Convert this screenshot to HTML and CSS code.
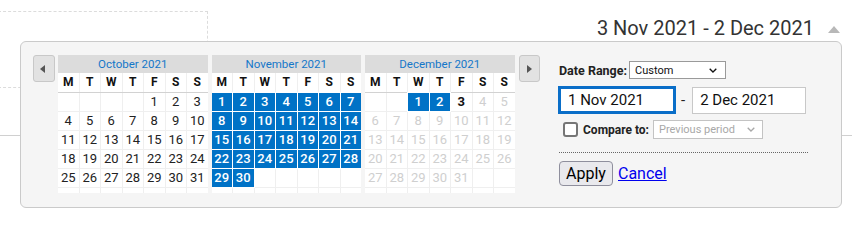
FILE: index.html
```html
<!DOCTYPE html>
<html lang="en">
<head>
<meta charset="utf-8">
<title>Date range picker</title>
<link rel="stylesheet" href="styles.css">
</head>
<body>
<div class="page">
  <div class="top">
    <div class="dash-box"></div>
    <div class="range"><span>3 Nov 2021 - 2 Dec 2021</span><svg class="caret" width="12" height="7" viewBox="0 0 12 7"><polygon points="0,7 6,0 12,7"/></svg></div>
  </div>
  <div class="rule"></div>

  <div class="popup">
    <button class="nav prev" type="button"><svg width="5" height="8" viewBox="0 0 5 8"><polygon points="5,0 0,4 5,8"/></svg></button>

    <div class="month">
      <div class="mtitle">October 2021</div>
      <div class="dow"><span>M</span><span>T</span><span>W</span><span>T</span><span>F</span><span>S</span><span>S</span></div>
      <div class="days">
        <span></span><span></span><span></span><span></span><span>1</span><span>2</span><span>3</span>
        <span>4</span><span>5</span><span>6</span><span>7</span><span>8</span><span>9</span><span>10</span>
        <span>11</span><span>12</span><span>13</span><span>14</span><span>15</span><span>16</span><span>17</span>
        <span>18</span><span>19</span><span>20</span><span>21</span><span>22</span><span>23</span><span>24</span>
        <span>25</span><span>26</span><span>27</span><span>28</span><span>29</span><span>30</span><span>31</span>
        <span></span><span></span><span></span><span></span><span></span><span></span><span></span>
      </div>
    </div>

    <div class="month">
      <div class="mtitle">November 2021</div>
      <div class="dow"><span>M</span><span>T</span><span>W</span><span>T</span><span>F</span><span>S</span><span>S</span></div>
      <div class="days">
        <span class="sel">1</span><span class="sel">2</span><span class="sel">3</span><span class="sel">4</span><span class="sel">5</span><span class="sel">6</span><span class="sel">7</span>
        <span class="sel">8</span><span class="sel">9</span><span class="sel">10</span><span class="sel">11</span><span class="sel">12</span><span class="sel">13</span><span class="sel">14</span>
        <span class="sel">15</span><span class="sel">16</span><span class="sel">17</span><span class="sel">18</span><span class="sel">19</span><span class="sel">20</span><span class="sel">21</span>
        <span class="sel">22</span><span class="sel">23</span><span class="sel">24</span><span class="sel">25</span><span class="sel">26</span><span class="sel">27</span><span class="sel">28</span>
        <span class="sel">29</span><span class="sel">30</span><span></span><span></span><span></span><span></span><span></span>
        <span></span><span></span><span></span><span></span><span></span><span></span><span></span>
      </div>
    </div>

    <div class="month">
      <div class="mtitle">December 2021</div>
      <div class="dow"><span>M</span><span>T</span><span>W</span><span>T</span><span>F</span><span>S</span><span>S</span></div>
      <div class="days">
        <span></span><span></span><span class="sel">1</span><span class="sel">2</span><span class="max">3</span><span class="off">4</span><span class="off">5</span>
        <span class="off">6</span><span class="off">7</span><span class="off">8</span><span class="off">9</span><span class="off">10</span><span class="off">11</span><span class="off">12</span>
        <span class="off">13</span><span class="off">14</span><span class="off">15</span><span class="off">16</span><span class="off">17</span><span class="off">18</span><span class="off">19</span>
        <span class="off">20</span><span class="off">21</span><span class="off">22</span><span class="off">23</span><span class="off">24</span><span class="off">25</span><span class="off">26</span>
        <span class="off">27</span><span class="off">28</span><span class="off">29</span><span class="off">30</span><span class="off">31</span><span></span><span></span>
        <span></span><span></span><span></span><span></span><span></span><span></span><span></span>
      </div>
    </div>

    <button class="nav next" type="button"><svg width="5" height="8" viewBox="0 0 5 8"><polygon points="0,0 5,4 0,8"/></svg></button>

    <div class="panel">
      <div class="row">
        <span class="lbl">Date Range:</span>
        <div class="sel-box custom"><span>Custom</span><svg width="8" height="5" viewBox="0 0 8 5"><polyline points="0.7,0.7 4,4 7.3,0.7"/></svg></div>
      </div>
      <div class="row inputs">
        <input class="inp focus" type="text" value="1 Nov 2021">
        <span class="hy">-</span>
        <input class="inp" type="text" value="2 Dec 2021">
      </div>
      <div class="row compare">
        <span class="cb"></span>
        <span class="lbl">Compare to:</span>
        <div class="sel-box dis"><span>Previous period</span><svg width="8" height="5" viewBox="0 0 8 5"><polyline points="0.7,0.7 4,4 7.3,0.7"/></svg></div>
      </div>
      <div class="divider"></div>
      <div class="actions">
        <button class="apply" type="button">Apply</button>
        <a class="cancel" href="#">Cancel</a>
      </div>
    </div>
  </div>
</div>
</body>
</html>
```

FILE: styles.css
```css
* { box-sizing: border-box; }
html, body { margin: 0; background: #fff; }
body { font-family: Roboto, "Liberation Sans", Arial, sans-serif; color: #222; }

.page { position: relative; width: 852px; height: 226px; overflow: hidden; }

.top { display: flex; justify-content: space-between; align-items: flex-start; }
.dash-box { margin-top: 11px; margin-left: -2px; width: 210px; height: 77px; border: 1px dashed #dcdcdc; }
.range { margin-top: 16px; margin-right: 12px; display: flex; align-items: center; font-size: 20px; line-height: 24px; color: #333; }
.range .caret { margin-left: 14px; margin-top: 3px; fill: #b8b8b8; }
.rule { margin-top: 47px; border-top: 1px solid #d0d0d0; }

.popup {
  position: absolute; left: 20px; top: 41px; width: 822px; height: 167px;
  border: 1px solid #cacaca; border-radius: 6px; background: #f5f5f5;
  padding: 13px 0 0 12px; display: flex; align-items: flex-start;
}
.nav {
  width: 22px; height: 27px; padding: 0; border: 1px solid #c8c8c8; border-radius: 3px;
  background: #e2e2e2; display: flex; align-items: center; justify-content: center;
}
.nav svg { fill: #555; }
.prev { margin-right: 3px; }
.prev svg { margin-right: 3px; }
.next { margin-left: 4.5px; width: 21px; }

.month { width: 149.5px; height: 138px; overflow: hidden; }
.month + .month { margin-left: 4px; }
.mtitle { height: 18px; line-height: 18px; background: #dcdcdc; color: #1477c9; font-size: 11.5px; text-align: center; }
.dow, .days { display: grid; grid-template-columns: repeat(7, 1fr); gap: 1px; background: #efefef; }
.dow { border-bottom: 1px solid #d2d2d2; }
.dow span { height: 19px; line-height: 19px; background: #fff; text-align: center; font-weight: bold; font-size: 12px; color: #111; }
.days span { height: 18px; line-height: 18px; background: #fff; text-align: center; font-size: 13px; color: #222; }
.days .sel { background: #0072c6; color: #fff; font-weight: 500; box-shadow: 0 0 0 1px #fff; }
.days .max { font-weight: bold; color: #111; }
.days .off { color: #cfcfcf; }

.panel { margin-left: 19px; width: 249px; padding-top: 6px; }
.row { display: flex; align-items: center; }
.lbl { font-weight: bold; font-size: 12.5px; color: #222; }
.sel-box {
  display: flex; align-items: center; justify-content: space-between;
  height: 18px; border: 1px solid #9a9a9a; background: #fff; font-size: 11px; color: #111;
  padding: 0 8px 0 5px;
}
.sel-box svg { stroke: currentColor; stroke-width: 1.3; fill: none; }
.sel-box.custom { width: 97px; margin-left: 2px; }
.sel-box.dis { width: 110px; height: 19px; border-color: #c3c3c3; color: #a8a8a8; margin-left: 4px; padding: 0 7px 0 5px; }

.inputs { margin-top: 7px; height: 28px; }
.inp {
  font-family: inherit; font-size: 15px; color: #111; background: #fff;
  border: 1px solid #c8c8c8; padding: 0 0 0 7px; width: 114px; height: 27px; outline: none; margin: 0;
}
.inp.focus { width: 118px; height: 28px; border: 3px solid #0a6ec8; margin-left: -1px; }
.hy { font-size: 15px; margin: 0 7px 0 5px; color: #222; }

.compare { margin-top: 6px; height: 19px; }
.cb { width: 15px; height: 15px; border: 2px solid #767676; border-radius: 3px; background: #fff; margin-left: 4px; }
.compare .lbl { margin-left: 5px; font-size: 12px; }

.divider { margin-top: 13px; border-top: 1px dotted #666; }
.actions { margin-top: 8px; display: flex; align-items: center; }
.apply {
  font-family: inherit; font-size: 16px; width: 54px; height: 25px; padding: 0;
  border: 1px solid #8f8f9d; border-radius: 4px; background: #e9e9ed; color: #000;
}
.cancel { margin-left: 5px; font-size: 16px; color: #0000ee; text-decoration: underline; }
```
